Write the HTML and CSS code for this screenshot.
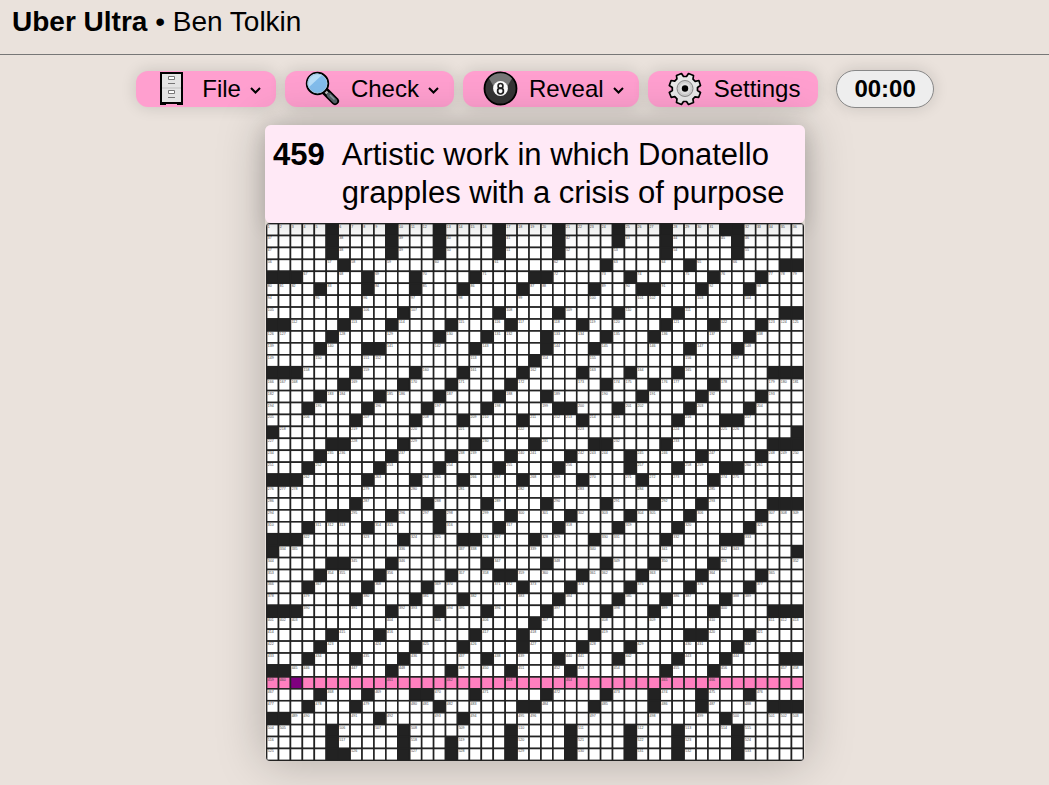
FILE: index.html
```html
<!DOCTYPE html>
<html lang="en">
<head>
<meta charset="utf-8">
<title>Uber Ultra</title>
<link rel="stylesheet" href="styles.css">
</head>
<body>
<header class="masthead"><h1 class="title"><strong>Uber Ultra</strong> • Ben Tolkin</h1></header>
<main class="stage">
  <nav class="toolbar" aria-label="Puzzle tools">
    <button class="tool has-menu" type="button">
      <svg class="icon" viewBox="1 0 38 36" aria-hidden="true">
        <path d="M8 2h21v30H8z" fill="#e4e4e4" stroke="#000" stroke-width="2"/>
        <path d="M7 32h6v2H7zM24 32h6v2h-6z"/>
        <path d="M9 17h19" stroke="#ccc" stroke-width="1.500"/>
        <path d="M15.500 5.500h6v3h-6zM15.500 19.500h6v3h-6z" fill="#fff" stroke="#777"/>
        <path d="M15 12.500h7M15 26.500h7" stroke="#777"/>
      </svg>
      <span>File</span>
      <svg class="chevron" viewBox="0 0 11 7" aria-hidden="true"><path d="M1 1l4.500 4.500L10 1"/></svg>
    </button>
    <button class="tool has-menu" type="button">
      <svg class="icon" viewBox="0 0 38 36" aria-hidden="true">
        <path d="M22.500 20.500L32 30" stroke="#000" stroke-width="8" stroke-linecap="round"/>
        <path d="M22 20L24.500 22.500" stroke="#bbb" stroke-width="3"/>
        <path d="M26 24L32 30" stroke="#556268" stroke-width="4.600" stroke-linecap="round"/>
        <path d="M27 24l4.500 4.500" stroke="#8c999e" stroke-width="1.500"/>
        <circle cx="14.500" cy="12.500" r="10.700" fill="#83bdec" stroke="#000" stroke-width="2"/>
        <path d="M5.500 16.500A9.500 9.500 0 0 1 19 4z" fill="#b9def8"/>
        <circle cx="14.500" cy="12.500" r="9.500" fill="none" stroke="#a5c8e4"/>
      </svg>
      <span>Check</span>
      <svg class="chevron" viewBox="0 0 11 7" aria-hidden="true"><path d="M1 1l4.500 4.500L10 1"/></svg>
    </button>
    <button class="tool has-menu" type="button">
      <svg class="icon" viewBox="0 0 38 36" aria-hidden="true">
        <circle cx="19.500" cy="17.500" r="16" fill="#353535" stroke="#000" stroke-width="1.800"/>
        <path d="M8 7.500a15.200 15.200 0 0 1 23 0l-5 8.500H13z" fill="#777"/>
        <circle cx="19.500" cy="17.500" r="7.400" fill="#fff"/>
        <circle cx="19.500" cy="14.900" r="2.400" fill="none" stroke="#222" stroke-width="1.700"/>
        <circle cx="19.500" cy="20.100" r="2.900" fill="none" stroke="#222" stroke-width="1.700"/>
      </svg>
      <span>Reveal</span>
      <svg class="chevron" viewBox="0 0 11 7" aria-hidden="true"><path d="M1 1l4.500 4.500L10 1"/></svg>
    </button>
    <button class="tool" type="button">
      <svg class="icon" viewBox="0 0 38 36" aria-hidden="true">
        <path d="M15.500 2.500l2 3h3l2-3 5 2-.500 3.700 2.200 2.100 3.700-.800 1.600 5-3 2v3l3 2-1.800 4.800-3.700-.500-2.100 2.200.600 3.500-5 2-2-3h-3l-2 3-5-2 .500-3.600-2.200-2.200-3.600.600-1.900-4.800 3-2v-3l-3-2 1.800-5 3.600.600 2.200-2.200-.400-3.400z" fill="#e8e8e8" stroke="#000" stroke-width="1.700" stroke-linejoin="round"/>
        <circle cx="19" cy="17.500" r="8" fill="#d0d0d0" stroke="#888"/>
        <circle cx="19" cy="17.500" r="5.500" fill="#e2e2e2"/>
        <circle cx="19" cy="17.500" r="3.200" fill="#000"/>
      </svg>
      <span>Settings</span>
    </button>
    <div class="timer" role="timer">00:00</div>
  </nav>
  <section class="puzzle">
    <div class="clue">
      <strong class="clue-number">459</strong>
      <span class="clue-text">Artistic work in which Donatello grapples with a crisis of purpose</span>
    </div>
    <svg class="grid" id="grid" viewBox="-1.500 -1.500 1353 1353" role="img" aria-label="Crossword grid"></svg>
  </section>
</main>
<script src="grid.js"></script>
</body>
</html>
```
FILE: styles.css
```css
* { box-sizing: border-box; }
body {
  margin: 0;
  min-height: 100vh;
  background: #eae2dc;
  color: #000;
  font-family: "Liberation Sans", Arial, sans-serif;
}
.masthead {
  padding: 6px 12px 16px;
  border-bottom: 1px solid #777;
}
.title {
  margin: 0;
  font-size: 28px;
  line-height: 32px;
  font-weight: 400;
}
.stage {
  display: flex;
  flex-direction: column;
  align-items: center;
  padding: 15px 0 24px 21px;
}
.toolbar {
  display: flex;
  align-items: center;
  gap: 9px;
}
.tool {
  display: flex;
  align-items: center;
  height: 36px;
  padding: 0 18px;
  border: 0;
  border-radius: 12px;
  background: #ff9fcf;
  box-shadow: 0 0 16px rgba(0, 0, 0, 0.14);
  color: #000;
  font: 24px "Liberation Sans", Arial, sans-serif;
}
.has-menu { padding-right: 15px; }
.icon {
  width: 38px;
  height: 36px;
  margin-right: 10px;
}
.chevron {
  width: 11px;
  height: 7px;
  margin: 3px 0 0 9px;
  fill: none;
  stroke: #000;
  stroke-width: 2;
}
.timer {
  margin-left: 9px;
  padding: 0 17px;
  border: 1px solid #888;
  border-radius: 19px;
  background: #eee;
  box-shadow: 0 0 16px rgba(0, 0, 0, 0.14);
  font-size: 24px;
  font-weight: 700;
  line-height: 36px;
}
.puzzle {
  position: relative;
  width: 540px;
  max-width: 100%;
  margin-top: 17px;
  border-radius: 6px;
  box-shadow: 0 0 48px rgba(0, 0, 0, 0.25);
}
.clue {
  position: relative;
  display: flex;
  gap: 17px;
  padding: 11px 8px;
  border-radius: 6px;
  background: #ffe9f6;
  box-shadow: 0 4px 20px rgba(0, 0, 0, 0.15);
  font-size: 31px;
  line-height: 38px;
}
.grid {
  display: block;
  width: calc(100% - 2px);
  margin: 0 auto;
  border-radius: 4px;
}
.cell {
  fill: #fff;
  stroke: #222;
  stroke-width: 4;
}
.block { fill: #222; }
.word { fill: #ff7fbf; }
.cursor { fill: #800080; }
.label {
  fill: #444;
  font: 9px "Liberation Sans", Arial, sans-serif;
}
```
FILE: grid.js
```js
const SIZE = 45;
const CELL = 30;
// Columns of the blocks in the upper half; the lower half is its half-turn image.
const upper = [
  [5,10,14,19,24,29,33,38,39],
  [5,10,14,19,24,29,33,39],
  [5,10,14,19,24,33,39],
  [6,28,35,43,44],
  [0,1,2,8,12,17,22,23,30,37,41],
  [4,8,12,16,21,27,31,32,36,40],
  [],
  [7,11,19,24,29,34,43,44],
  [0,1,6,10,15,20,26,33,37,41],
  [5,14,18,23,28,32,40],
  [4,8,9,17,23,27,35,39],
  [22],
  [0,1,2,7,12,16,21,26,30,34,42,43,44],
  [6,11,15,20,28,32,37],
  [4,9,14,19,23,31,36,41],
  [3,8,13,18,24,25,29,35,40],
  [7,12,16,21,26,34,38,39],
  [0,44],
  [5,6,11,17,22,27,28,33,42,43,44],
  [4,10,15,20,25,30,36,41],
  [3,9,14,19,24,30,34,38,39],
  [0,1,2,8,12,16,21,26,31,37],
  []
];
const blocks = new Set();
upper.forEach((cols, row) => cols.forEach(col => {
  blocks.add(row * SIZE + col);
  blocks.add((SIZE - 1 - row) * SIZE + SIZE - 1 - col);
}));
const closed = (row, col) =>
  row < 0 || col < 0 || row >= SIZE || col >= SIZE || blocks.has(row * SIZE + col);

let number = 0;
let cells = "";
let labels = "";
for (let row = 0; row < SIZE; row++) {
  for (let col = 0; col < SIZE; col++) {
    const block = closed(row, col);
    const cursor = row === 38 && col === 2;
    const kind = block ? " block" : cursor ? " cursor" : row === 38 ? " word" : "";
    cells += `<rect class="cell${kind}" x="${col * CELL}" y="${row * CELL}" width="${CELL}" height="${CELL}"/>`;
    if (block) continue;
    const across = closed(row, col - 1) && !closed(row, col + 1);
    const down = closed(row - 1, col) && !closed(row + 1, col);
    if (across || down) {
      number++;
      labels += `<text class="label" x="${col * CELL + 3}" y="${row * CELL + 10}">${number}</text>`;
    }
  }
}
document.getElementById("grid").innerHTML = cells + labels;
```
